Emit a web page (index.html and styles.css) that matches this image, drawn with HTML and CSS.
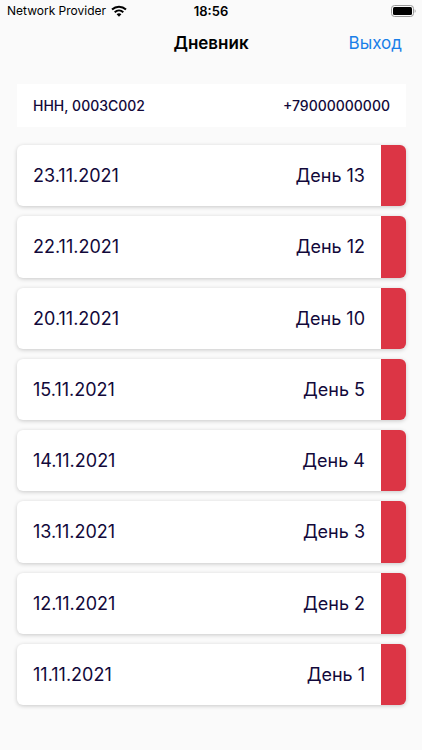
FILE: index.html
```html
<!DOCTYPE html>
<html lang="ru">
<head>
<meta charset="utf-8">
<meta name="viewport" content="width=device-width, initial-scale=1">
<title>Дневник</title>
<link rel="stylesheet" href="styles.css">
</head>
<body>
<div class="screen">
  <div class="status">
    <div class="carrier">
      <span>Network Provider</span>
      <svg class="wifi" viewBox="0 0 16 12" aria-hidden="true">
        <path d="M1 4.500C5 .8 11 .8 15 4.500" />
        <path d="M3.700 7.200C6.200 4.900 9.800 4.900 12.300 7.200" />
        <path class="dot" d="M8 11.700L5.600 9.300C7 8 9 8 10.400 9.300Z" />
      </svg>
    </div>
    <span class="clock">18:56</span>
    <svg class="battery" viewBox="0 0 26 12" aria-hidden="true">
      <rect class="shell" x="1.500" y="0.500" width="22" height="11" rx="3" />
      <rect x="3" y="2" width="19" height="8" rx="1.500" />
      <path class="cap" d="M24.700 4.200C25.900 4.600 25.900 7.400 24.700 7.800Z" />
    </svg>
  </div>
  <header class="nav">
    <h1 class="title">Дневник</h1>
    <a class="exit" href="#exit">Выход</a>
  </header>
  <main class="content">
    <section class="patient">
      <span>ННН, 0003C002</span>
      <span>+79000000000</span>
    </section>
    <nav class="days" aria-label="Дни">
      <a class="day" href="#13"><span>23.11.2021</span><span>День 13</span></a>
      <a class="day" href="#12"><span>22.11.2021</span><span>День 12</span></a>
      <a class="day" href="#10"><span>20.11.2021</span><span>День 10</span></a>
      <a class="day" href="#5"><span>15.11.2021</span><span>День 5</span></a>
      <a class="day" href="#4"><span>14.11.2021</span><span>День 4</span></a>
      <a class="day" href="#3"><span>13.11.2021</span><span>День 3</span></a>
      <a class="day" href="#2"><span>12.11.2021</span><span>День 2</span></a>
      <a class="day" href="#1"><span>11.11.2021</span><span>День 1</span></a>
    </nav>
  </main>
</div>
</body>
</html>
```

FILE: styles.css
```css
* { box-sizing: border-box; }

body {
  margin: 0;
  background: #fafafa;
  color: #12093a;
  font-family: Inter, "Liberation Sans", sans-serif;
}

a { text-decoration: none; }

.screen {
  display: flex;
  flex-direction: column;
  min-height: 100vh;
}

.status,
.nav {
  display: grid;
  grid-template-columns: 1fr auto 1fr;
  align-items: center;
  color: #000;
}

.status {
  height: 21px;
  padding: 0 6px;
  font-size: 12px;
}

.carrier {
  display: flex;
  align-items: center;
  gap: 5px;
  padding-left: 1px;
  white-space: nowrap;
}

.wifi {
  width: 16px;
  height: 12px;
  fill: none;
  stroke: #000;
  stroke-width: 2;
}

.wifi .dot {
  fill: #000;
  stroke: none;
}

.clock {
  font-size: 13px;
  font-weight: 600;
}

.battery {
  justify-self: end;
  width: 26px;
  height: 12px;
}

.battery .shell {
  fill: none;
  stroke: #999;
}

.battery .cap { fill: #999; }

.nav {
  height: 44px;
  padding: 0 20px;
}

.title {
  grid-column: 2;
  margin: 0;
  font-size: 17px;
  font-weight: 600;
}

.exit {
  justify-self: end;
  color: #1a7fe8;
  font-size: 17px;
}

.content {
  display: flex;
  flex: 1;
  flex-direction: column;
  gap: 18px;
  padding: 19px 16px 45px 17px;
}

.patient {
  display: flex;
  align-items: center;
  justify-content: space-between;
  min-height: 43px;
  padding: 0 16px;
  background: #fff;
  font-size: 14px;
  font-weight: 500;
}

.days {
  display: grid;
  flex: 1;
  grid-auto-rows: minmax(61px, 1fr);
  gap: 10px;
}

.day {
  display: flex;
  align-items: center;
  justify-content: space-between;
  padding: 0 16px;
  border-right: 25px solid #dc3545;
  border-radius: 6px;
  background: #fff;
  box-shadow: 0 1px 4px rgba(0, 0, 0, 0.2);
  color: inherit;
  font-size: 18px;
}
```
